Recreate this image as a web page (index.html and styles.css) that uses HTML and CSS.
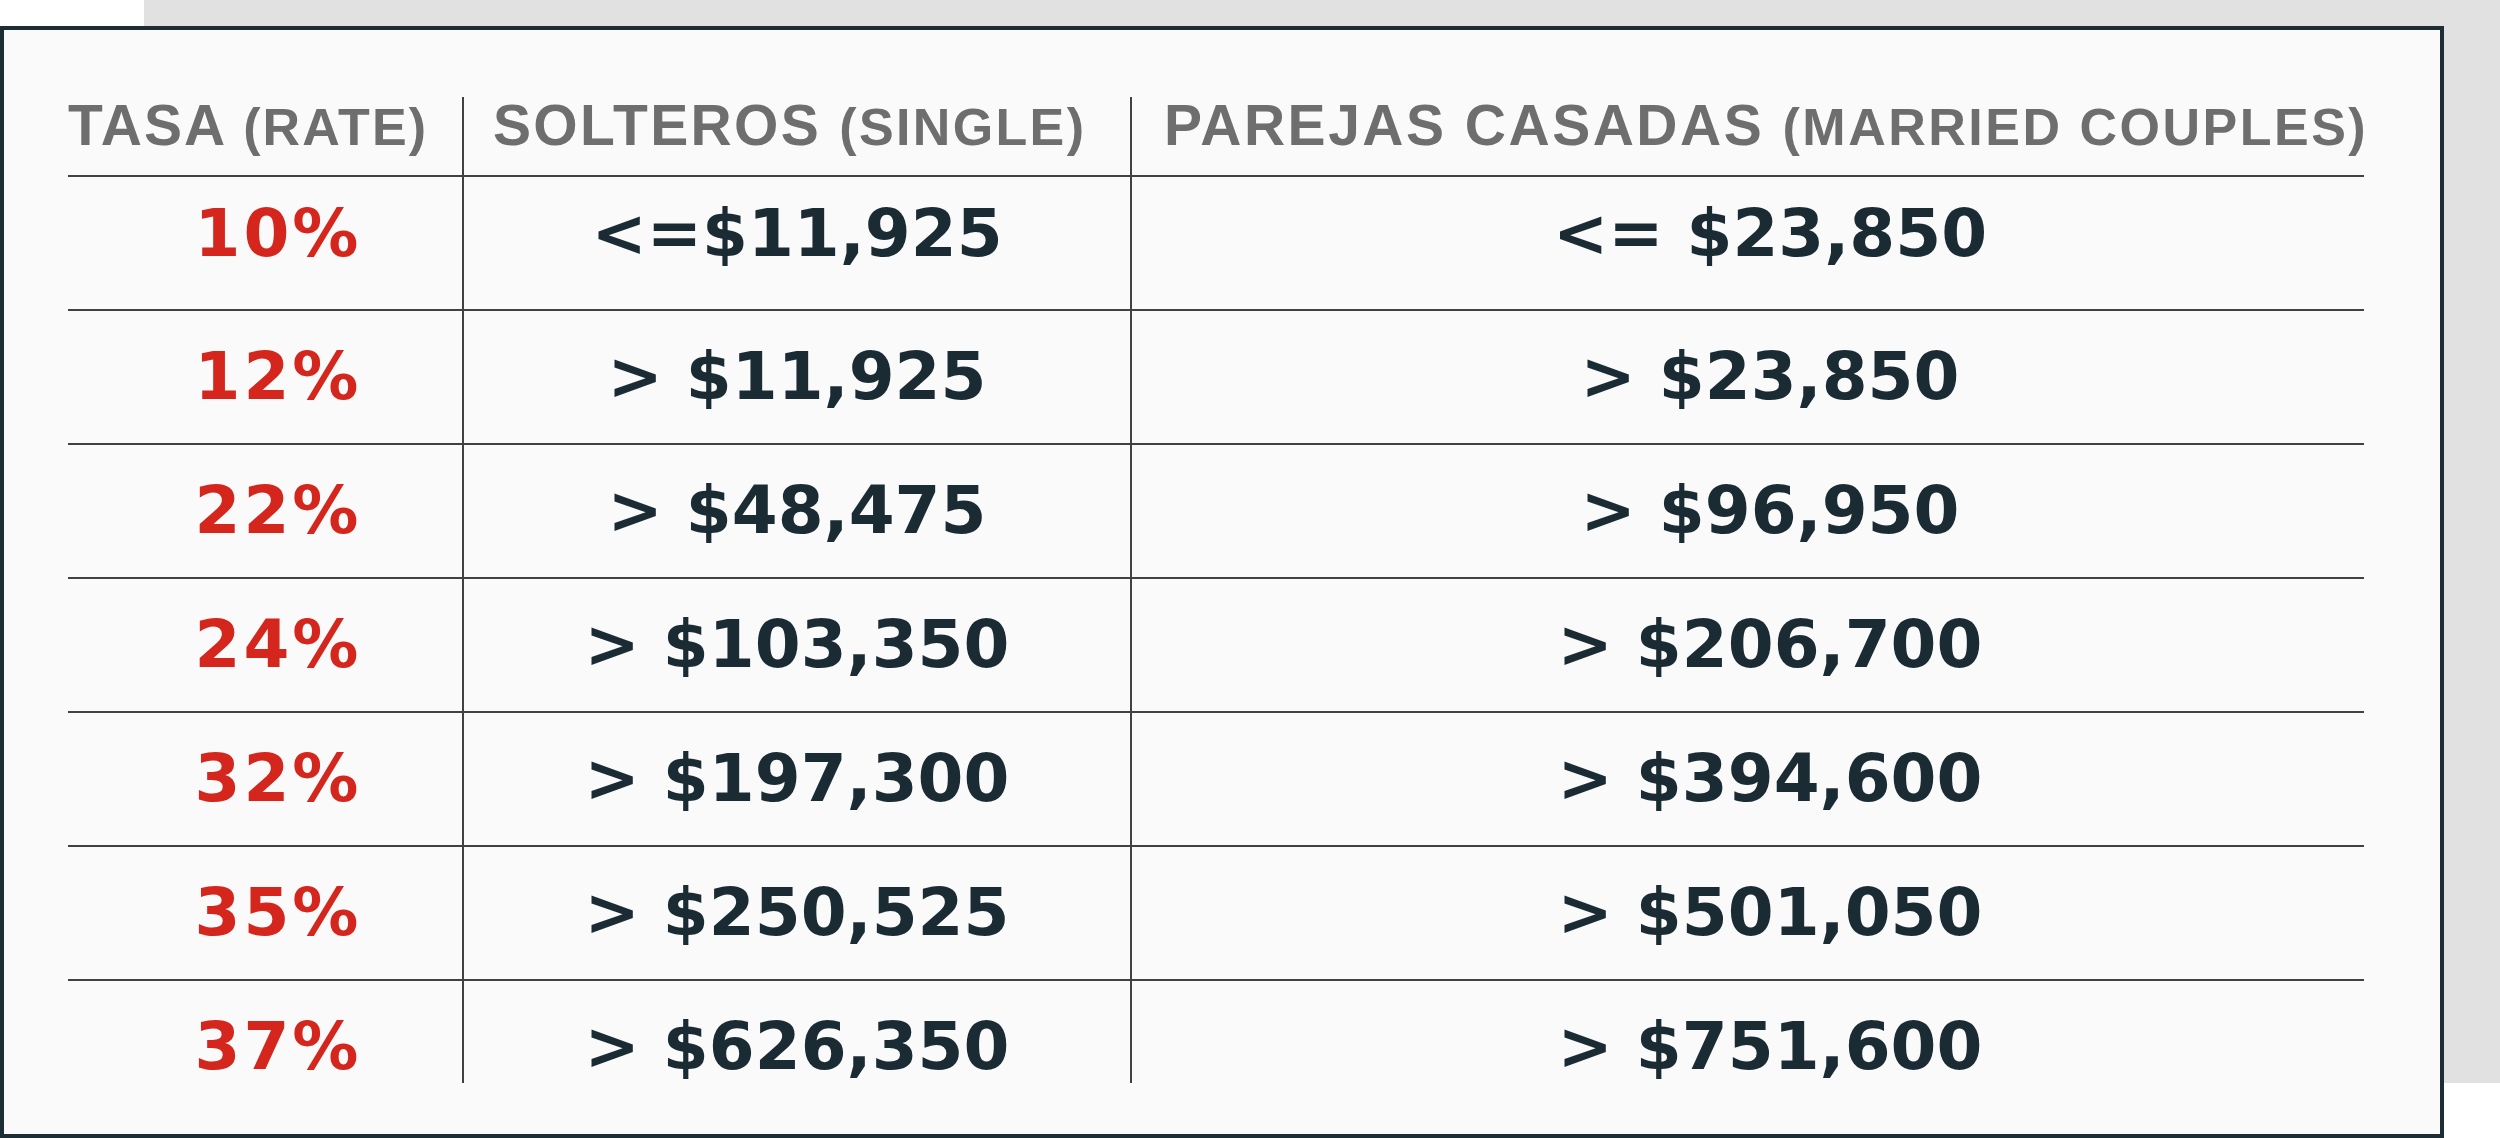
FILE: index.html
```html
<!DOCTYPE html>
<html lang="es">
<head>
<meta charset="utf-8">
<title>Tasas de impuestos</title>
<link rel="stylesheet" href="styles.css">
</head>
<body>
<div class="page">
  <div class="backdrop"></div>
  <div class="card">
    <div class="rates">
      <div class="cell head head-rate">TASA <span class="sub">(RATE)</span></div>
      <div class="cell head head-single">SOLTEROS <span class="sub">(SINGLE)</span></div>
      <div class="cell head head-married">PAREJAS CASADAS <span class="sub">(MARRIED COUPLES)</span></div>

      <div class="cell rate first">10%</div>
      <div class="cell amount single first">&lt;=$11,925</div>
      <div class="cell amount married first">&lt;= $23,850</div>

      <div class="cell rate">12%</div>
      <div class="cell amount single">&gt; $11,925</div>
      <div class="cell amount married">&gt; $23,850</div>

      <div class="cell rate">22%</div>
      <div class="cell amount single">&gt; $48,475</div>
      <div class="cell amount married">&gt; $96,950</div>

      <div class="cell rate">24%</div>
      <div class="cell amount single">&gt; $103,350</div>
      <div class="cell amount married">&gt; $206,700</div>

      <div class="cell rate">32%</div>
      <div class="cell amount single">&gt; $197,300</div>
      <div class="cell amount married">&gt; $394,600</div>

      <div class="cell rate">35%</div>
      <div class="cell amount single">&gt; $250,525</div>
      <div class="cell amount married">&gt; $501,050</div>

      <div class="cell rate last">37%</div>
      <div class="cell amount single last">&gt; $626,350</div>
      <div class="cell amount married last">&gt; $751,600</div>
    </div>
  </div>
</div>
</body>
</html>
```

FILE: styles.css
```css
* { box-sizing: border-box; }
html, body { margin: 0; padding: 0; background: #ffffff; }
body { width: 2500px; height: 1138px; overflow: hidden; }

.page {
  position: relative;
  width: 2500px;
  height: 1138px;
  padding-top: 26px;
}

.backdrop {
  position: absolute;
  left: 144px;
  top: 0;
  right: 0;
  height: 1083px;
  background: #e1e1e1;
}

.card {
  position: relative;
  width: 2444px;
  height: 1112px;
  background: #fafafa;
  border: 4px solid #1d2d35;
  padding: 67px 0 0 64px;
}

.rates {
  display: grid;
  grid-template-columns: 396px 668px 1232px;
  grid-auto-rows: 134px;
  grid-template-rows: 80px;
}

.cell {
  border-bottom: 2px solid #3f4142;
}
.cell:nth-child(3n+1), .cell:nth-child(3n+2) {
  border-right: 2px solid #3f4142;
}
.cell.last { border-bottom: none; height: 102px; }

.head {
  font-family: "Liberation Sans", Arial, sans-serif;
  font-weight: 700;
  font-size: 57px;
  line-height: 56px;
  color: #6d6e6d;
  white-space: nowrap;
}
.head .sub { font-size: 52px; }
.head-rate { padding-left: 0; letter-spacing: 2.1px; }
.head-single { padding-left: 29px; letter-spacing: 2.35px; }
.head-married { padding-left: 32px; letter-spacing: 2.5px; }

.rate, .amount {
  font-family: "DejaVu Sans", "Liberation Sans", sans-serif;
  font-weight: 700;
  font-size: 66px;
  line-height: 80px;
  text-align: center;
  white-space: nowrap;
  padding-top: 26px;
}
.first { padding-top: 17px; }
.rate { color: #d4261c; padding-left: 26px; letter-spacing: 3px; }
.amount { color: #1a2b33; }
.married { padding-left: 44px; }
```
